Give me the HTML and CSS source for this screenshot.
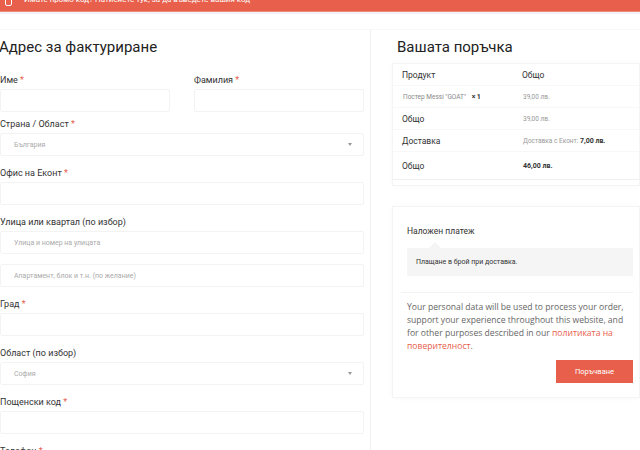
FILE: index.html
```html
<!DOCTYPE html>
<html lang="bg">
<head>
<meta charset="utf-8">
<title>Поръчка</title>
<link rel="stylesheet" href="styles.css">
</head>
<body>
<div class="page">
  <div class="banner">
    <span class="banner-icon"></span>
    <span class="banner-text">Имате промо код? Натиснете тук, за да въведете вашия код</span>
  </div>
  <div class="spacer"></div>
  <div class="main">
    <section class="billing">
      <h2 class="title">Адрес за фактуриране</h2>
      <div class="row-two">
        <div class="field">
          <label class="label">Име <span class="req">*</span></label>
          <div class="input"></div>
        </div>
        <div class="field">
          <label class="label">Фамилия <span class="req">*</span></label>
          <div class="input"></div>
        </div>
      </div>
      <div class="field">
        <label class="label">Страна / Област <span class="req">*</span></label>
        <div class="input select"><span class="ph">България</span><span class="arrow"></span></div>
      </div>
      <div class="field">
        <label class="label">Офис на Еконт <span class="req">*</span></label>
        <div class="input"></div>
      </div>
      <div class="field">
        <label class="label">Улица или квартал (по избор)</label>
        <div class="input"><span class="ph">Улица и номер на улицата</span></div>
        <div class="input second"><span class="ph">Апартамент, блок и т.н. (по желание)</span></div>
      </div>
      <div class="field">
        <label class="label">Град <span class="req">*</span></label>
        <div class="input"></div>
      </div>
      <div class="field">
        <label class="label">Област (по избор)</label>
        <div class="input select"><span class="ph">София</span><span class="arrow"></span></div>
      </div>
      <div class="field tall">
        <label class="label">Пощенски код <span class="req">*</span></label>
        <div class="input"></div>
      </div>
      <div class="field">
        <label class="label">Телефон <span class="req">*</span></label>
        <div class="input"></div>
      </div>
    </section>
    <section class="order">
      <h2 class="title order-title">Вашата поръчка</h2>
      <div class="table">
        <div class="tr head"><div class="td c1">Продукт</div><div class="td c2">Общо</div></div>
        <div class="tr"><div class="td c1 small">Постер Messi "GOAT" <b class="qty">×&thinsp;1</b></div><div class="td c2 small">39,00 лв.</div></div>
        <div class="tr"><div class="td c1">Общо</div><div class="td c2 small">39,00 лв.</div></div>
        <div class="tr"><div class="td c1">Доставка</div><div class="td c2 small">Доставка с Еконт: <b class="dark">7,00 лв.</b></div></div>
        <div class="tr last"><div class="td c1">Общо</div><div class="td c2 small"><b class="dark">46,00 лв.</b></div></div>
      </div>
      <div class="payment">
        <div class="methods">
          <div class="method-name">Наложен платеж</div>
          <div class="method-box">Плащане в брой при доставка.</div>
        </div>
        <div class="place">
          <p class="privacy">Your personal data will be used to process your order, support your experience throughout this website, and for other purposes described in our <a class="link">политиката на поверителност</a>.</p>
          <div class="btn-row"><button class="btn">Поръчване</button></div>
        </div>
      </div>
    </section>
  </div>
</div>
</body>
</html>
```
FILE: styles.css
```css
* { box-sizing: border-box; }
html, body { margin: 0; padding: 0; background: #fff; }
body {
  font-family: Roboto, "Liberation Sans", Arial, sans-serif;
  color: #333;
  width: 640px;
  height: 450px;
  overflow: hidden;
}
.banner {
  height: 12px;
  background: #e8604c;
  border-bottom: 1px solid #ee8a7b;
  display: flex;
  align-items: flex-start;
  overflow: hidden;
  color: #fff;
  font-size: 8px;
  line-height: 10px;
  padding-left: 5px;
}
.banner-icon {
  width: 7px;
  height: 11px;
  margin-top: -5px;
  border: 1px solid #fff;
  border-radius: 2px;
  flex: none;
}
.banner-text {
  margin-top: -5px;
  margin-left: 12px;
  white-space: nowrap;
}
.spacer {
  height: 18px;
  border-top: 2px solid #f4f3f8;
  border-bottom: 1px solid #f7f7f7;
}
.main {
  display: grid;
  grid-template-columns: 371px 1fr;
}
.billing {
  padding-right: 6px;
  border-right: 1px solid #f2f2f2;
}
.title {
  margin: 0;
  padding-top: 8px;
  font-size: 15px;
  line-height: 18px;
  font-weight: 400;
  color: #222;
}
.billing .title { margin-bottom: 19px; margin-left: -1px; }
.row-two {
  display: grid;
  grid-template-columns: 1fr 1fr;
  column-gap: 24px;
  margin-bottom: -5px;
}
.field { margin-bottom: 12px; }
.field.tall { margin-top: 2px; }
.label {
  display: block;
  font-size: 9px;
  line-height: 10px;
  margin-bottom: 4px;
  color: #333;
}
.req { color: #e8604c; }
.input {
  height: 23px;
  border: 1px solid #f3f3f3;
  border-radius: 2px;
  background: #fff;
  display: flex;
  align-items: center;
  padding-left: 13px;
  padding-right: 11px;
}
.input.second { margin-top: 10px; }
.select { justify-content: space-between; }
.ph { font-size: 7px; color: #aaa; }
.arrow {
  width: 0; height: 0;
  border-left: 2.5px solid transparent;
  border-right: 2.5px solid transparent;
  border-top: 3px solid #999;
}
.order { padding-left: 21px; }
.order-title { margin-left: 5px; margin-bottom: 7px; }
.table {
  border: 1px solid #f4f4f4;
  box-shadow: 0 0 5px rgba(0,0,0,0.035);
  padding-bottom: 5px;
}
.tr {
  display: flex;
  height: 22px;
  align-items: center;
  border-bottom: 1px solid #f7f7f7;
}
.tr.last { height: 28px; border-bottom: 1px solid #f0f0f0; }
.td { font-size: 8.5px; color: #333; }
.c1 { width: 128px; padding-left: 9px; flex: none; }
.c2 { padding-left: 1px; }
.small { font-size: 6.5px; color: #999; }
.c1.small { padding-left: 10px; color: #888; }
.c2.small { padding-left: 2px; }
.qty { color: #333; font-weight: 700; font-size: 7px; margin-left: 4px; }
.dark { color: #333; font-weight: 700; font-size: 7px; }
.payment {
  margin-top: 20px;
  border: 1px solid #f4f4f4;
  box-shadow: 0 0 6px rgba(0,0,0,0.03);
  padding: 0 6px 14px 14px;
}
.methods {
  padding-top: 19px;
  padding-bottom: 16px;
  border-bottom: 1px solid #f3f3f3;
  margin-left: -6px;
  padding-left: 6px;
}
.method-name { font-size: 8.5px; line-height: 10px; margin-bottom: 12px; color: #333; }
.method-box {
  position: relative;
  height: 28px;
  background: #f5f5f5;
  border-radius: 2px;
  font-size: 7px;
  color: #333;
  display: flex;
  align-items: center;
  padding-left: 9px;
}
.method-box::before {
  content: "";
  position: absolute;
  left: 22px;
  top: -6px;
  border-left: 6px solid transparent;
  border-right: 6px solid transparent;
  border-bottom: 6px solid #f5f5f5;
}
.place { padding-top: 8px; }
.privacy {
  margin: 0;
  font-family: "Open Sans", "Liberation Sans", sans-serif;
  font-size: 8.6px;
  line-height: 13px;
  color: #666;
  padding-right: 2px;
}
.link { color: #e8604c; }
.btn-row { display: flex; justify-content: flex-end; margin-top: 7px; }
.btn {
  width: 77px;
  height: 23px;
  background: #e8604c;
  border: none;
  color: #fff;
  font-family: Roboto, sans-serif;
  font-size: 7.5px;
  padding: 0;
}
```
